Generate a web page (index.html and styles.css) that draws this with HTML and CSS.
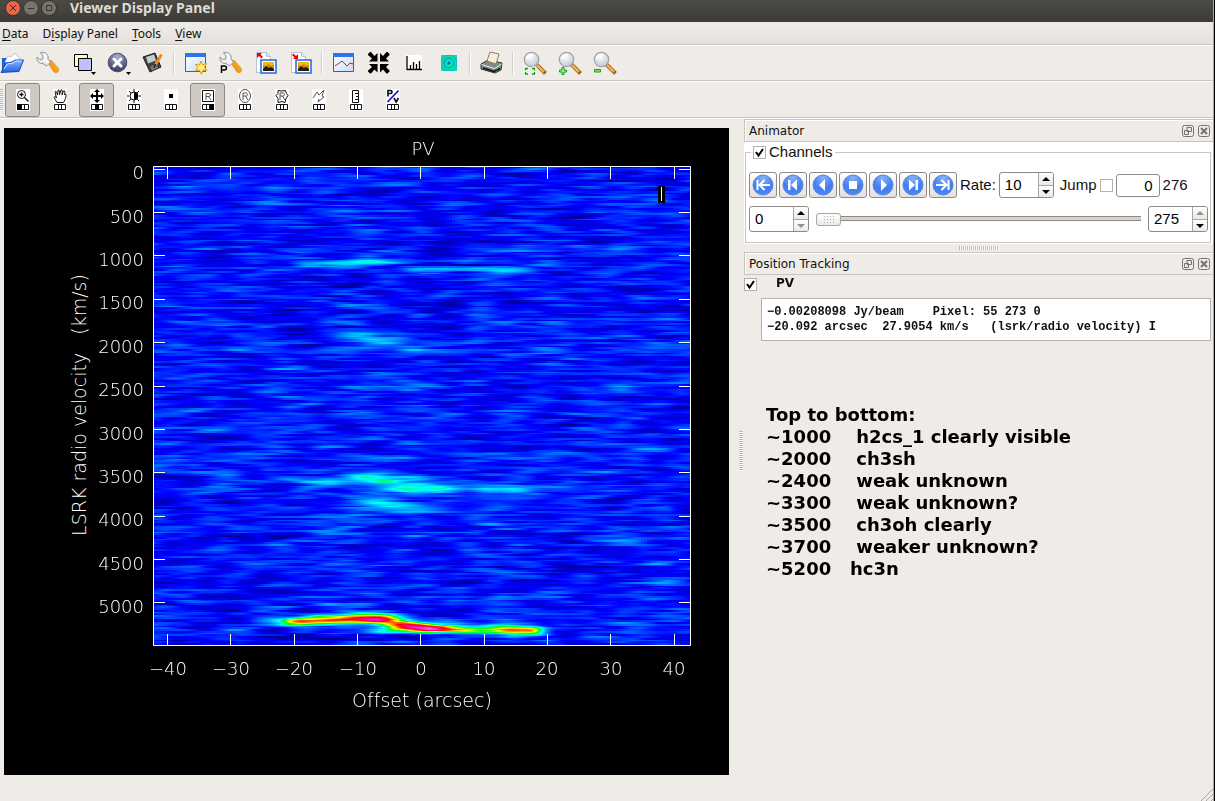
FILE: index.html
```html
<!DOCTYPE html>
<html lang="en">
  <head>
    <meta charset="utf-8">
    <title>Viewer Display Panel</title>
    <link rel="stylesheet" href="styles.css">
  </head>
  <body>
    <!-- shared icon parts -->
    <svg class="defs" aria-hidden="true">
      <defs>
        <linearGradient id="blue-fill" x1="0" y1="0" x2="0" y2="1">
          <stop offset="0" stop-color="#8fb8ff"/>
          <stop offset="1" stop-color="#1c5fe0"/>
        </linearGradient>
        <linearGradient id="sky-fill" x1="0" y1="0" x2="1" y2="1">
          <stop offset="0" stop-color="#ffffff"/>
          <stop offset="1" stop-color="#c4dcf8"/>
        </linearGradient>
        <linearGradient id="handle-fill" x1="0" y1="1" x2="1" y2="0">
          <stop offset="0" stop-color="#e87a10"/>
          <stop offset="1" stop-color="#ffc832"/>
        </linearGradient>
        <radialGradient id="lens-fill" cx="0.4" cy="0.3" r="0.8">
          <stop offset="0" stop-color="#ffffff"/>
          <stop offset="1" stop-color="#b9c2c8"/>
        </radialGradient>
        <radialGradient id="ball-fill" cx="0.5" cy="0.2" r="0.8">
          <stop offset="0" stop-color="#a8b0cc"/>
          <stop offset="1" stop-color="#30385e"/>
        </radialGradient>
        <radialGradient id="play-fill" cx="0.5" cy="0.15" r="0.9">
          <stop offset="0" stop-color="#8ab2fa"/>
          <stop offset="0.6" stop-color="#3f7df2"/>
          <stop offset="1" stop-color="#4c8cff"/>
        </radialGradient>
        <symbol id="wrench" viewBox="0 0 24 24">
          <path d="M12 12l3-3 7 8c2 3-1 6-4 4z" fill="url(#handle-fill)" stroke="#d98d1c" stroke-width="0.7"/>
          <path d="M4.500 1.500l2.500 3.500-0.500 3-3 0.500-2.500-2.500c-0.500 4 2 7 6 6.500l3.500 2.500 4-4-2.500-3.500c1-4-3-7-7.500-6z" fill="#e9ebee" stroke="#84898f" stroke-width="0.900"/>
          <path d="M8 3l2 3-1 3 4 3" fill="none" stroke="#fff" stroke-width="1.500"/>
        </symbol>
        <symbol id="magnifier" viewBox="0 0 24 24">
          <path d="M13 13l8 8" stroke="#8a5a20" stroke-width="4" stroke-linecap="square"/>
          <path d="M14 14l7 7" stroke="#f5b04c" stroke-width="2.500"/>
          <path d="M12 12l2 2" stroke="#aaa" stroke-width="3"/>
          <circle cx="8.500" cy="8.500" r="7.200" fill="url(#lens-fill)" stroke="#9ca3a8" stroke-width="1.200"/>
          <path d="M4 8c0-3 3-5 6-4" fill="none" stroke="#fff" stroke-width="2"/>
        </symbol>
        <symbol id="picture" viewBox="0 0 24 24">
          <path d="M2.500 1.500h10l4 4v16h-14z" fill="#fff" stroke="#b7c4d4"/>
          <path d="M12.500 1.500v4h4" fill="#dbe5f0" stroke="#b7c4d4"/>
          <rect x="7" y="9" width="15" height="13" fill="#fff" stroke="#2068d8" stroke-width="1.500"/>
          <rect x="9" y="11" width="11" height="9" fill="#c88a10"/>
          <path d="M9 11h11v3l-3 1-2-2-3 2-3-1z" fill="#f0b428"/>
          <path d="M9 18l3-3 3 2 2-1 3 2v2H9z" fill="#2c1c04"/>
        </symbol>
        <symbol id="cells" viewBox="0 0 14 22">
          <path fill="#fff" d="M0 0h14v22H0z"/>
          <path d="M1.500 15.500h11v5h-11zM5.500 15v6M8.500 15v6" fill="none" stroke="#111"/>
        </symbol>
      </defs>
    </svg>

    <div class="window">
      <header class="titlebar">
        <button class="window-button close" aria-label="Close"><svg viewBox="0 0 14 14"><path d="M4 4l6 6m0-6l-6 6"/></svg></button>
        <button class="window-button" aria-label="Minimize"><svg viewBox="0 0 14 14"><path d="M4 7.500h6"/></svg></button>
        <button class="window-button" aria-label="Maximize"><svg viewBox="0 0 14 14"><path d="M4.500 4.500h5v5h-5z"/></svg></button>
        <h1>Viewer Display Panel</h1>
      </header>

      <nav class="menubar">
        <button><u>D</u>ata</button>
        <button>D<u>i</u>splay Panel</button>
        <button><u>T</u>ools</button>
        <button><u>V</u>iew</button>
      </nav>

      <div class="toolbar main-tools">
        <button class="first" aria-label="Open data"><svg viewBox="0 0 24 24">
          <path d="M2 7h7l2 2h8v12H2z" fill="#1d5fd0"/>
          <path d="M5 11l3-6 3 1 4-4 5 6-2 6z" fill="#fff" stroke="#a9bfe4" stroke-width="0.800"/>
          <path d="M1 21.500l5-9.500 6-1 3-2h8.500l-4.500 11.500z" fill="url(#blue-fill)" stroke="#1450c0"/>
          <path d="M4 18l3.500-5 6-1 2-2h6" fill="none" stroke="#cfe2ff"/>
        </svg></button>
        <button aria-label="Data options"><svg><use href="#wrench"/></svg></button>
        <button aria-label="Registered data"><svg viewBox="0 0 24 24">
          <path d="M3.500 3.500h13v12h-13z" fill="#ffffc0" stroke="#000"/>
          <path d="M7.500 7.500h13v12h-13z" fill="#c0c0ff" stroke="#000"/>
          <path d="M20 21h5l-2.500 3z"/>
        </svg></button>
        <button aria-label="Close data"><svg viewBox="0 0 24 24">
          <circle cx="11.500" cy="11.500" r="9.300" fill="url(#ball-fill)" stroke="#4a4f66"/>
          <path d="M8 8l7 7m0-7l-7 7" stroke="#fff" stroke-width="3" stroke-linecap="round"/>
          <path d="M20 21h5l-2.500 3z"/>
        </svg></button>
        <button aria-label="Save as"><svg viewBox="0 0 24 24">
          <path d="M2 6l12-4 6 14-11 5z" fill="#3f4348" stroke="#222"/>
          <path d="M5 6l8-2.500 2 6-8 3z" fill="#c8ccd0"/>
          <path d="M9 16l6-3 2 4-6 2.500z" fill="#777d82"/>
          <path d="M20.500 3.500l-6 10" stroke="#f08c1c" stroke-width="3"/>
          <path d="M14.500 13l-1.500 4" stroke="#222" stroke-width="1.500"/>
        </svg></button>
        <span class="separator"></span>
        <button aria-label="New panel"><svg viewBox="0 0 24 24">
          <path d="M1.500 2.500h20v18h-20z" fill="url(#sky-fill)" stroke="#2462c8"/>
          <path d="M1 2h21v4H1z" fill="#2c74e8"/>
          <path d="M17 10l1.500 3.800 4-1.300-2 3.700 2.500 3-4-0.300-1.500 4.600-2-4.400-4 0.900 2.300-3.300-2.300-3.200 4 0.500z" fill="#fff27a" stroke="#e8980c"/>
        </svg></button>
        <button aria-label="Panel options"><svg viewBox="0 0 24 24">
          <use href="#wrench"/>
          <path d="M2.500 22v-7h3c2.500 0 2.500 4 0 4h-3" fill="none" stroke="#000" stroke-width="1.500"/>
        </svg></button>
        <button aria-label="Save panel state"><svg viewBox="0 0 24 24"><use href="#picture"/><path d="M3 2h5L6.500 3.500 9 6 7.500 7.500 5 5 3 7z" fill="#f00000"/></svg></button>
        <button aria-label="Restore panel state"><svg viewBox="0 0 24 24"><use href="#picture"/><path d="M9 8H4l1.500-1.500L3 4 4.500 2.500 7 5l2-2z" fill="#f00000"/></svg></button>
        <span class="separator"></span>
        <button aria-label="Profile"><svg viewBox="0 0 24 24">
          <path d="M1.500 2.500h20v18h-20z" fill="url(#sky-fill)" stroke="#2462c8"/>
          <path d="M1 2h21v4H1z" fill="#2c74e8"/>
          <path d="M3 15l3-2 4-3 5 5 3-3 3 1" fill="none" stroke="#e02020"/>
        </svg></button>
        <button aria-label="Collapse"><svg viewBox="0 0 24 24">
          <path d="M10.500 10.500H2l3-3L1 4l0-1 2-2h1l3.500 4 3-3zM13 10.500V2l3 3 3.500-4h1l2 2v1L19 7.500l3 3zM10.500 13v8.500l-3-3L4 22.500H3l-2-2v-1L5 16l-3-3zM13 13h9l-3 3 3.500 3.500v1l-2 2h-1L16 18.500l-3 3z"/>
        </svg></button>
        <button aria-label="Histogram"><svg viewBox="0 0 24 24">
          <path d="M4 4h16v16H4z" fill="#fff"/>
          <path d="M5 5v13.500h15M8.500 18v-4M11.500 18v-7M14.500 18v-5M17.500 18v-8" fill="none" stroke="#000" stroke-width="1.300"/>
        </svg></button>
        <button aria-label="Fit"><svg viewBox="0 0 24 24">
          <path d="M4 4h16v16H4z" fill="#10b0f0"/>
          <path d="M4 4h4l-4 4zM20 4v4l-4-4zM4 20v-4l4 4zM20 20h-4l4-4z" fill="#10e0a0"/>
          <circle cx="12" cy="12" r="6.500" fill="#1098e8" stroke="#00f080" stroke-width="1.600"/>
          <circle cx="12" cy="12" r="3.500" fill="#00d8c0" stroke="#00f080" stroke-width="1.500"/>
          <circle cx="12" cy="12" r="1.300" fill="#1060f0"/>
        </svg></button>
        <span class="separator"></span>
        <button aria-label="Print"><svg viewBox="0 0 24 24">
          <path d="M1 13l7-4 14 3-1 7-6 3-14-4z" fill="#85898a" stroke="#333"/>
          <path d="M7 10l3-9 9 2-3 10z" fill="#fbeed8" stroke="#8c8066"/>
          <path d="M1.500 13.500l13 4 7-4.500" fill="none" stroke="#eee"/>
          <path d="M3 17l11 3.500 6-3" fill="none" stroke="#111" stroke-width="1.600"/>
          <path d="M16 18l2-1" stroke="#3c3" stroke-width="1.500"/>
        </svg></button>
        <span class="separator"></span>
        <button aria-label="Unzoom"><svg viewBox="0 0 24 24"><use href="#magnifier"/><path d="M2 20v-3h3m4 0h3v3m0 0v3H9m-4 0H2v-3" fill="none" stroke="#eefbe8" stroke-width="3"/><path d="M2.500 19.500v-2H5m4 0h2.500v2m0 1.500v2H9m-4 0H2.500V21" fill="none" stroke="#16a016" stroke-width="1.300"/></svg></button>
        <button aria-label="Zoom in"><svg viewBox="0 0 24 24"><use href="#magnifier"/><path d="M4 16.500h2v2.500h2.500v2H6v2.500H4V21H1.500v-2H4z" fill="#a8f090" stroke="#16a016"/></svg></button>
        <button aria-label="Zoom out"><svg viewBox="0 0 24 24"><use href="#magnifier"/><path d="M1.500 18.500h6v2.500h-6z" fill="#8ce070" stroke="#16a016"/></svg></button>
      </div>

      <div class="toolbar mouse-tools">
        <span class="grip"></span>
        <button class="active" aria-label="Zooming"><svg viewBox="0 0 14 22"><use href="#cells"/>
          <circle cx="5.500" cy="5.500" r="4" class="line"/><path d="M3.500 5.500h4M5.500 3.500v4M8.500 8.500l4 4" class="line" stroke-width="1.400"/><path d="M1 15h4v6H1z"/></svg></button>
        <button aria-label="Panning"><svg viewBox="0 0 14 22"><use href="#cells"/>
          <path d="M4 13.500l-3-5c0-1.500 1.500-1 2.500 0.500L2 3c0.500-1.500 1.500-1 2.500 3L5 1.500c0.500-1.500 1.500-1 1.500 4L8 1c1-1 1.500 0 1 5l1.500-4c1-1 2 0 1 4l1-1c1.500 0.500 0 5-2 8.500z" class="line"/></svg></button>
        <button class="active" aria-label="Stretch-shift colors"><svg viewBox="0 0 14 22"><use href="#cells"/>
          <path d="M7 0l3 3H8v3h3V4l3 3-3 3V8H8v3h2l-3 3-3-3h2V8H3v2L0 7l3-3v2h3V3H4z"/><path d="M5 15h4v6H5z"/></svg></button>
        <button aria-label="Brightness and contrast"><svg viewBox="0 0 14 22"><use href="#cells"/>
          <circle cx="7" cy="7" r="4" class="line"/><path d="M7 3c5.500 0 5.500 8 0 8z"/><path d="M7 0v3M7 11v3M0 7h2M12 7h2M2 2l2 2M2 12l2-2M12 2l-2 2M12 12l-2-2" class="line"/></svg></button>
        <button aria-label="Position"><svg viewBox="0 0 14 22"><use href="#cells"/><path d="M5 5h4v4H5z"/></svg></button>
        <button class="active" aria-label="Rectangle region"><svg viewBox="0 0 14 22"><use href="#cells"/>
          <path d="M1.500 1.500h11v11h-11z" class="line"/><path d="M5 11V4.500h3c2 0 2 3 0 3H5m2.500 0L10 11" class="thin"/><path d="M9 15h4v6H9z"/></svg></button>
        <button aria-label="Ellipse region"><svg viewBox="0 0 14 22"><use href="#cells"/>
          <ellipse cx="7" cy="7" rx="5.500" ry="6.500" class="thin"/><path d="M5 11V4h3c2 0 2 3 0 3H5m2.500 0L10 11" class="thin"/></svg></button>
        <button aria-label="Polygon region"><svg viewBox="0 0 14 22"><use href="#cells"/>
          <path d="M3 1.500l3.500 0.500 4-0.500 1 3 1.500 2-2 3-1 4-3-1-4 1v-4l-2-3 2-2z" class="line"/><path d="M5 11V4h3c2 0 2 3 0 3H5m2.500 0L10 11" class="thin"/></svg></button>
        <button aria-label="Polyline"><svg viewBox="0 0 14 22"><use href="#cells"/>
          <path d="M1 9l4-6 2 3 5-5-2 6 2 1-6 5 1-3" class="thin"/></svg></button>
        <button aria-label="Ruler"><svg viewBox="0 0 14 22"><use href="#cells"/>
          <path d="M3.500 1.500h6v12h-6zM6 4.500h3M7 7.500h2M6 10.500h3" class="line"/></svg></button>
        <button aria-label="P/V line"><svg viewBox="0 0 14 22"><use href="#cells"/>
          <path d="M2 7.500V1.500h2.500c2 0 2 3 0 3H2M8 9l2.200 4L12.500 9" class="line" stroke-width="1.700"/><path d="M1.500 13L12.500 1.500" stroke="#1414f0" stroke-width="1.800"/></svg></button>
      </div>

      <main class="workspace">
        <section class="display">
          <svg class="plot" viewBox="0 0 725 647">
            <foreignObject x="149" y="38" width="538" height="480">
              <canvas id="raster" class="raster" width="538" height="480"></canvas>
            </foreignObject>
            <path class="axes" d="M149.500 38.500h537v479h-537z
              M163.500 39v12m0 455v11M226.500 39v12m0 455v11M290.500 39v12m0 455v11M353.500 39v12m0 455v11M416.500 39v12m0 455v11M480.500 39v12m0 455v11M543.500 39v12m0 455v11M606.500 39v12m0 455v11M670.500 39v12m0 455v11
              M150 41.500h11m514 0h11M150 84.500h11m514 0h11M150 127.500h11m514 0h11M150 171.500h11m514 0h11M150 214.500h11m514 0h11M150 258.500h11m514 0h11M150 301.500h11m514 0h11M150 344.500h11m514 0h11M150 388.500h11m514 0h11M150 431.500h11m514 0h11M150 474.500h11m514 0h11"/>
            <path d="M654 58h7v17h-7z"/>
            <path class="axes" d="M657.500 59v14"/>
            <g class="label middle">
              <text x="419" y="27">PV</text>
              <text x="164" y="547">−40</text>
              <text x="227" y="547">−30</text>
              <text x="290" y="547">−20</text>
              <text x="354" y="547">−10</text>
              <text x="417" y="547">0</text>
              <text x="480" y="547">10</text>
              <text x="543" y="547">20</text>
              <text x="607" y="547">30</text>
              <text x="670" y="547">40</text>
            </g>
            <g class="label middle axis-title">
              <text x="418" y="579">Offset (arcsec)</text>
              <text transform="translate(82 277) rotate(-90)" xml:space="preserve">LSRK radio velocity   (km/s)</text>
            </g>
            <g class="label end">
              <text x="140" y="51">0</text>
              <text x="140" y="95">500</text>
              <text x="140" y="138">1000</text>
              <text x="140" y="181">1500</text>
              <text x="140" y="225">2000</text>
              <text x="140" y="268">2500</text>
              <text x="140" y="312">3000</text>
              <text x="140" y="355">3500</text>
              <text x="140" y="398">4000</text>
              <text x="140" y="442">4500</text>
              <text x="140" y="485">5000</text>
            </g>
          </svg>
        </section>

        <div class="splitter"><span></span></div>

        <aside class="docks">
          <section class="dock">
            <header class="dock-title">
              <h2>Animator</h2>
              <button aria-label="Float animator"><svg viewBox="0 0 12 12"><rect x="0.500" y="0.500" width="11" height="11" rx="2"/><path d="M5 2.500h4.500v4H5zM2.500 5.500h4v4h-4z"/></svg></button>
              <button aria-label="Close animator"><svg viewBox="0 0 12 12"><rect x="0.500" y="0.500" width="11" height="11" rx="2"/><path d="M3 3l6 6m0-6l-6 6" stroke-width="2"/></svg></button>
            </header>
            <div class="animator">
              <fieldset>
                <legend><input type="checkbox" id="channels" checked><label for="channels">Channels</label></legend>
                <div class="row">
                  <div class="play-buttons">
                    <button aria-label="First"><svg viewBox="0 0 22 22"><circle cx="11" cy="11" r="10"/><path d="M18 11H8m4.500-5L7.500 11l5 5M5.500 6v10" class="arrow"/></svg></button>
                    <button aria-label="Step back"><svg viewBox="0 0 22 22"><circle cx="11" cy="11" r="10"/><path d="M15 5.500v11L9 11zM6 6h2.500v10H6z"/></svg></button>
                    <button aria-label="Play backwards"><svg viewBox="0 0 22 22"><circle cx="11" cy="11" r="10"/><path d="M13 5v12l-6-6z"/></svg></button>
                    <button aria-label="Stop"><svg viewBox="0 0 22 22"><circle cx="11" cy="11" r="10"/><path d="M7 7h8v8H7z"/></svg></button>
                    <button aria-label="Play"><svg viewBox="0 0 22 22"><circle cx="11" cy="11" r="10"/><path d="M9 5v12l6-6z"/></svg></button>
                    <button aria-label="Step forward"><svg viewBox="0 0 22 22"><circle cx="11" cy="11" r="10"/><path d="M7 5.500v11l6-5.500zM13.500 6H16v10h-2.500z"/></svg></button>
                    <button aria-label="Last"><svg viewBox="0 0 22 22"><circle cx="11" cy="11" r="10"/><path d="M4 11h10m-4.500-5l5 5-5 5M16.500 6v10" class="arrow"/></svg></button>
                  </div>
                  <label for="rate">Rate:</label>
                  <span class="spin rate">
                    <input type="text" id="rate" value="10">
                    <button class="up" aria-label="Increase rate"></button>
                    <button class="down" aria-label="Decrease rate"></button>
                  </span>
                  <label class="jump-label" for="jump">Jump</label>
                  <input type="checkbox" id="jump">
                  <input type="text" class="frame" value="0" aria-label="Frame">
                  <span>276</span>
                </div>
                <div class="row slider-row">
                  <span class="spin">
                    <input type="text" value="0" aria-label="First channel">
                    <button class="up" aria-label="Increase first channel"></button>
                    <button class="down" disabled aria-label="Decrease first channel"></button>
                  </span>
                  <input type="range" min="0" max="275" value="0" aria-label="Channel">
                  <span class="spin">
                    <input type="text" value="275" aria-label="Last channel">
                    <button class="up" disabled aria-label="Increase last channel"></button>
                    <button class="down" aria-label="Decrease last channel"></button>
                  </span>
                </div>
              </fieldset>
            </div>
          </section>

          <div class="dock-handle"><span></span></div>

          <section class="dock">
            <header class="dock-title">
              <h2>Position Tracking</h2>
              <button aria-label="Float position tracking"><svg viewBox="0 0 12 12"><rect x="0.500" y="0.500" width="11" height="11" rx="2"/><path d="M5 2.500h4.500v4H5zM2.500 5.500h4v4h-4z"/></svg></button>
              <button aria-label="Close position tracking"><svg viewBox="0 0 12 12"><rect x="0.500" y="0.500" width="11" height="11" rx="2"/><path d="M3 3l6 6m0-6l-6 6" stroke-width="2"/></svg></button>
            </header>
            <div class="tracking-name"><input type="checkbox" id="pv" checked><label for="pv">PV</label></div>
            <pre class="readout">−0.00208098 Jy/beam    Pixel: 55 273 0
−20.092 arcsec  27.9054 km/s   (lsrk/radio velocity) I</pre>
          </section>

          <pre class="notes">Top to bottom:
~1000    h2cs_1 clearly visible
~2000    ch3sh
~2400    weak unknown
~3300    weak unknown?
~3500    ch3oh clearly
~3700    weaker unknown?
~5200   hc3n</pre>
        </aside>
      </main>

      <footer class="statusbar">
        <svg viewBox="0 0 12 12"><path d="M0 12L12 0M5 12l7-7M10 12l2-2"/></svg>
      </footer>
    </div>
    <script src="raster.js"></script>
  </body>
</html>
```

FILE: styles.css
```css
:root {
  --bg: #efebe7;
  --line: #c8c5c0;
  --edge: #8f8a85;
  --text: #101010;
  --ui-font: "Noto Sans", "Open Sans", sans-serif;
  --form-font: "Liberation Sans", Arial, sans-serif;
}

* {
  box-sizing: border-box;
}

body {
  margin: 0;
  background: #000;
  color: var(--text);
  font: 12px/16px var(--ui-font);
}

button {
  padding: 0;
  border: none;
  background: none;
  color: inherit;
  font: inherit;
}

h1, h2, pre {
  margin: 0;
}

.defs {
  position: absolute;
  width: 0;
  height: 0;
}

.window {
  display: flex;
  flex-direction: column;
  min-height: 100vh;
  margin-right: 1px;
  border-right: 1px solid #a8a5a0;
  background: var(--bg);
}

/* title bar and menu */
.titlebar {
  display: flex;
  align-items: center;
  gap: 2px;
  height: 22px;
  padding: 0 0 6px 5px;
  background: linear-gradient(#4b4a44, #3c3b37);
  color: #dfdbd2;
}

.titlebar h1 {
  margin-left: 11px;
  font-size: 14px;
  line-height: 16px;
}

.window-button {
  width: 16px;
  height: 16px;
  border: 1px solid #33322e;
  border-radius: 50%;
  background: #75736c;
}

.window-button.close {
  background: #ee6544;
}

.window-button svg {
  display: block;
  width: 14px;
  height: 14px;
  fill: none;
  stroke: #33322e;
}

.menubar {
  display: flex;
  align-items: center;
  gap: 14px;
  height: 24px;
  padding: 1px 2px 0;
  border-bottom: 1px solid #fff;
  background: linear-gradient(#f0ede9, #e3dfda);
  box-shadow: inset 0 -1px var(--line);
}

.menubar u {
  text-underline-offset: 2px;
}

/* toolbars */
.toolbar {
  display: flex;
  align-items: center;
  padding-bottom: 1px;
  border-bottom: 1px solid #fff;
  box-shadow: inset 0 -1px var(--line);
}

.toolbar button {
  display: flex;
  flex: none;
  align-items: center;
  justify-content: center;
  width: 35px;
  height: 34px;
}

.main-tools {
  height: 36px;
}

.main-tools svg {
  width: 24px;
  height: 24px;
  overflow: visible;
}

.main-tools .first {
  width: 30px;
  padding-right: 6px;
}

.separator {
  width: 2px;
  height: 22px;
  margin: 0 3px;
  border-left: 1px solid #d2cec9;
  border-right: 1px solid #fff;
}

.mouse-tools {
  gap: 2px;
  height: 37px;
}

.mouse-tools svg {
  width: 14px;
  height: 22px;
}

.mouse-tools .active {
  border: 1px solid var(--edge);
  border-radius: 3px;
  background: #d0c9c3;
}

.grip {
  width: 3px;
  height: 22px;
  background: repeating-linear-gradient(#b5b1ac 0 1px, #fff 1px 2px);
}

.line, .thin {
  fill: none;
  stroke: #111;
}

.thin {
  stroke: #555;
}

/* workspace */
.workspace {
  display: grid;
  flex: 1;
  grid-template-columns: minmax(0, 1fr) 15px 469px;
}

.display {
  display: flex;
  padding: 9px 0 7px 4px;
}

.plot {
  width: 100%;
  background: #000;
}

.raster {
  display: block;
  width: 100%;
  height: 100%;
}

.axes {
  fill: none;
  stroke: #fff;
}

.label {
  fill: #fff;
  font-family: "DejaVu Sans Light", "DejaVu Sans", sans-serif;
  font-size: 18px;
  font-variant-ligatures: none;
  font-weight: 200;
}

.axis-title {
  font-size: 19px;
  white-space: pre;
}

.middle {
  text-anchor: middle;
}

.end {
  text-anchor: end;
}

.splitter {
  display: flex;
  align-items: center;
  justify-content: flex-end;
  padding-right: 1px;
}

.splitter span {
  width: 4px;
  height: 40px;
  background: repeating-linear-gradient(#bdb9b4 0 1px, #fff 1px 2px);
}

/* docks */
.dock-title {
  display: flex;
  align-items: center;
  gap: 4px;
  height: 23px;
  padding: 0 3px 0 4px;
  border: 1px solid var(--line);
  border-right: none;
  box-shadow: inset 1px 1px #fff;
}

.dock-title h2 {
  flex: 1;
  font: 12px/16px "DejaVu Sans", sans-serif;
}

.dock-title svg {
  display: block;
  width: 12px;
  height: 12px;
  fill: none;
  stroke: #77736e;
}

.animator {
  padding: 1px 2px 1px 1px;
  background: #fff;
  font: 15px/18px var(--form-font);
}

.animator fieldset {
  min-width: 0;
  margin: 0;
  padding: 0 2px 10px 3px;
  border: 1px solid var(--line);
}

.animator legend {
  display: flex;
  align-items: center;
  gap: 3px;
  margin-left: 2px;
  padding: 0 3px 0 2px;
}

input[type="checkbox"] {
  flex: none;
  width: 13px;
  height: 13px;
  margin: 0;
  appearance: none;
  border: 1px solid #b5b1ac;
  background: #fff;
}

input[type="checkbox"]:checked {
  background: #fff url("data:image/svg+xml,%3Csvg xmlns='http://www.w3.org/2000/svg' viewBox='0 0 11 11'%3E%3Cpath d='M2 5l2.500 3.500L9 2' fill='none' stroke='%23000' stroke-width='2'/%3E%3C/svg%3E");
}

.row {
  display: flex;
  align-items: center;
  gap: 3px;
  padding-top: 11px;
}

.slider-row {
  gap: 7px;
  padding-top: 8px;
}

.play-buttons {
  display: flex;
  gap: 2px;
}

.play-buttons button {
  display: flex;
  align-items: center;
  justify-content: center;
  width: 28px;
  height: 26px;
  border: 1px solid var(--edge);
  border-radius: 3px;
  background: linear-gradient(#fff, #e4dfda);
}

.play-buttons svg {
  width: 22px;
  height: 22px;
  fill: #fff;
}

.play-buttons circle {
  fill: url(#play-fill);
  stroke: #5a86d8;
}

.play-buttons .arrow {
  fill: none;
  stroke: #fff;
  stroke-width: 2;
}

.spin {
  display: grid;
  flex: none;
  grid-template: 1fr 1fr / 1fr 15px;
  width: 60px;
  height: 26px;
  border: 1px solid var(--edge);
  border-radius: 3px;
  background: #fff;
  overflow: hidden;
}

.spin.rate {
  width: 55px;
}

.spin input {
  grid-row: span 2;
  min-width: 0;
  padding: 0 5px;
  border: none;
  background: none;
  font: inherit;
}

.spin button {
  display: grid;
  place-items: center;
  border-left: 1px solid #aaa5a0;
  background: linear-gradient(#fff, #ece8e4);
}

.spin .down {
  border-top: 1px solid #aaa5a0;
}

.spin button::before {
  content: "";
  border: 4px solid transparent;
  border-top-width: 0;
  border-bottom-color: #000;
}

.spin .down::before {
  transform: rotate(180deg);
}

.spin button:disabled::before {
  border-bottom-color: #96918c;
}

.jump-label {
  margin-left: 3px;
}

.frame {
  width: 44px;
  height: 23px;
  padding: 0 6px;
  border: 1px solid var(--edge);
  border-radius: 3px;
  font: inherit;
  text-align: right;
}

input[type="range"] {
  flex: 1;
  min-width: 0;
  height: 14px;
  margin: 0;
  appearance: none;
  background: linear-gradient(#8f8a85, #8f8a85) 0 4px / 100% 1px no-repeat, linear-gradient(#8f8a85, #8f8a85) 0 8px / 100% 1px no-repeat, linear-gradient(#d9d1ca, #d9d1ca) 0 5px / 100% 3px no-repeat;
}

input[type="range"]::-webkit-slider-thumb {
  width: 25px;
  height: 13px;
  padding: 1px 6px;
  appearance: none;
  border: 1px solid #aaa5a0;
  border-radius: 3px;
  background: radial-gradient(circle, #b5b1ac 0 1px, transparent 1px) 6px 0 / 3px 3px content-box, linear-gradient(#fff, #ece8e4);
}

.dock-handle {
  display: flex;
  justify-content: center;
  padding: 2px;
}

.dock-handle span {
  width: 40px;
  height: 4px;
  background: repeating-linear-gradient(90deg, #bdb9b4 0 1px, #fff 1px 2px);
}

.tracking-name {
  display: flex;
  align-items: flex-end;
  gap: 19px;
  font: bold 12px/16px "DejaVu Sans", sans-serif;
}

.readout {
  margin: 7px 2px 0 17px;
  padding: 6px 5px 5px;
  border: 1px solid #b5b1ac;
  background: #fff;
  font: bold 12px/15px "Liberation Mono", "Courier New", monospace;
}

.notes {
  margin: 63px 0 0 22px;
  color: #000;
  font: bold 18px/22px "DejaVu Sans", sans-serif;
}

.statusbar {
  display: flex;
  align-items: flex-end;
  justify-content: flex-end;
  height: 19px;
}

.statusbar svg {
  width: 12px;
  height: 12px;
  fill: none;
  stroke: #aaa5a0;
}
```

FILE: raster.js
```js
const canvas = document.getElementById('raster');
const ctx = canvas.getContext('2d');
const W = canvas.width;
const H = canvas.height;
const COLS = 180;
const ROWS = 276;

// rainbow colour map: [level, r, g, b]
const stops = [
  [0, 0, 0, 0],
  [0.12, 0, 0, 128],
  [0.25, 0, 0, 255],
  [0.5, 0, 255, 255],
  [0.6, 0, 255, 0],
  [0.7, 255, 255, 0],
  [0.78, 255, 128, 0],
  [0.86, 255, 0, 0],
  [0.94, 255, 0, 200],
  [1.1, 255, 255, 255],
];

// emission lines: [x, y, sigma x, sigma y, strength]
const lines = [
  [222, 95, 22, 2.4, 0.26], [182, 97, 24, 2.5, 0.17], [150, 98, 10, 3, 0.12],
  [280, 103, 26, 1.6, 0.26], [350, 104, 22, 2.2, 0.21],
  [215, 175, 24, 5, 0.14], [270, 182, 20, 5, 0.1],
  [272, 218, 16, 2, 0.12], [220, 208, 14, 2, 0.09],
  [225, 292, 14, 2, 0.09],
  [217, 311, 24, 3.6, 0.27], [162, 315, 22, 3, 0.18],
  [262, 321, 26, 5, 0.23], [352, 322, 24, 3.5, 0.21], [285, 321, 12, 2, 0.06],
  [225, 336, 20, 3.5, 0.17], [258, 343, 22, 3.5, 0.16],
  [142, 455, 12, 2.8, 0.4], [168, 454, 18, 3, 0.4],
  [205, 452, 20, 3.6, 0.6], [232, 453, 13, 3.5, 0.33],
  [252, 458, 15, 3.6, 0.42], [278, 462, 18, 3.2, 0.66],
  [310, 463, 15, 2.8, 0.22], [340, 462, 18, 3, 0.38],
  [364, 464, 14, 3.3, 0.42], [381, 464, 8, 3, 0.2],
  [235, 463, 20, 3, 0.15], [122, 454, 12, 3, 0.1],
];

let seed = 20921;
function random() {
  seed = (seed * 1664525 + 1013904223) % 4294967296;
  return seed / 4294967296;
}

function gauss() {
  return random() + random() + random() + random() - 2;
}

// horizontally smoothed noise, each channel slightly tied to the one above
function makeNoise() {
  const rows = [];
  for (let r = 0; r < ROWS; r++) {
    const raw = Array.from({ length: COLS + 24 }, gauss);
    const row = [];
    for (let c = 0; c < COLS; c++) {
      let sum = 0;
      let norm = 0;
      for (let k = 0; k <= 24; k++) {
        const w = Math.exp(-((k - 12) ** 2) / 24);
        sum += w * raw[c + k];
        norm += w * w;
      }
      const prev = r ? rows[r - 1][c] : 0;
      row.push(0.92 * sum / Math.sqrt(norm) + 0.35 * prev);
    }
    rows.push(row);
  }
  return rows;
}

function colour(v) {
  v = Math.max(0, Math.min(1.1, v));
  let i = 1;
  while (stops[i][0] < v) i++;
  const a = stops[i - 1];
  const b = stops[i];
  const t = (v - a[0]) / (b[0] - a[0]);
  return [1, 2, 3].map((n) => a[n] + t * (b[n] - a[n]));
}

const noise = makeNoise();
const image = ctx.createImageData(W, H);
for (let y = 0; y < H; y++) {
  const r = Math.floor(y * ROWS / H);
  for (let x = 0; x < W; x++) {
    const c = Math.floor(x * COLS / W);
    let v = 0.265 + 0.075 * noise[r][c];
    for (const [cx, cy, sx, sy, strength] of lines) {
      v += strength * Math.exp(-((x - cx) ** 2) / (2 * sx * sx) - ((y - cy) ** 2) / (2 * sy * sy));
    }
    const rgb = colour(v);
    const p = (y * W + x) * 4;
    image.data[p] = rgb[0];
    image.data[p + 1] = rgb[1];
    image.data[p + 2] = rgb[2];
    image.data[p + 3] = 255;
  }
}
ctx.putImageData(image, 0, 0);
```
